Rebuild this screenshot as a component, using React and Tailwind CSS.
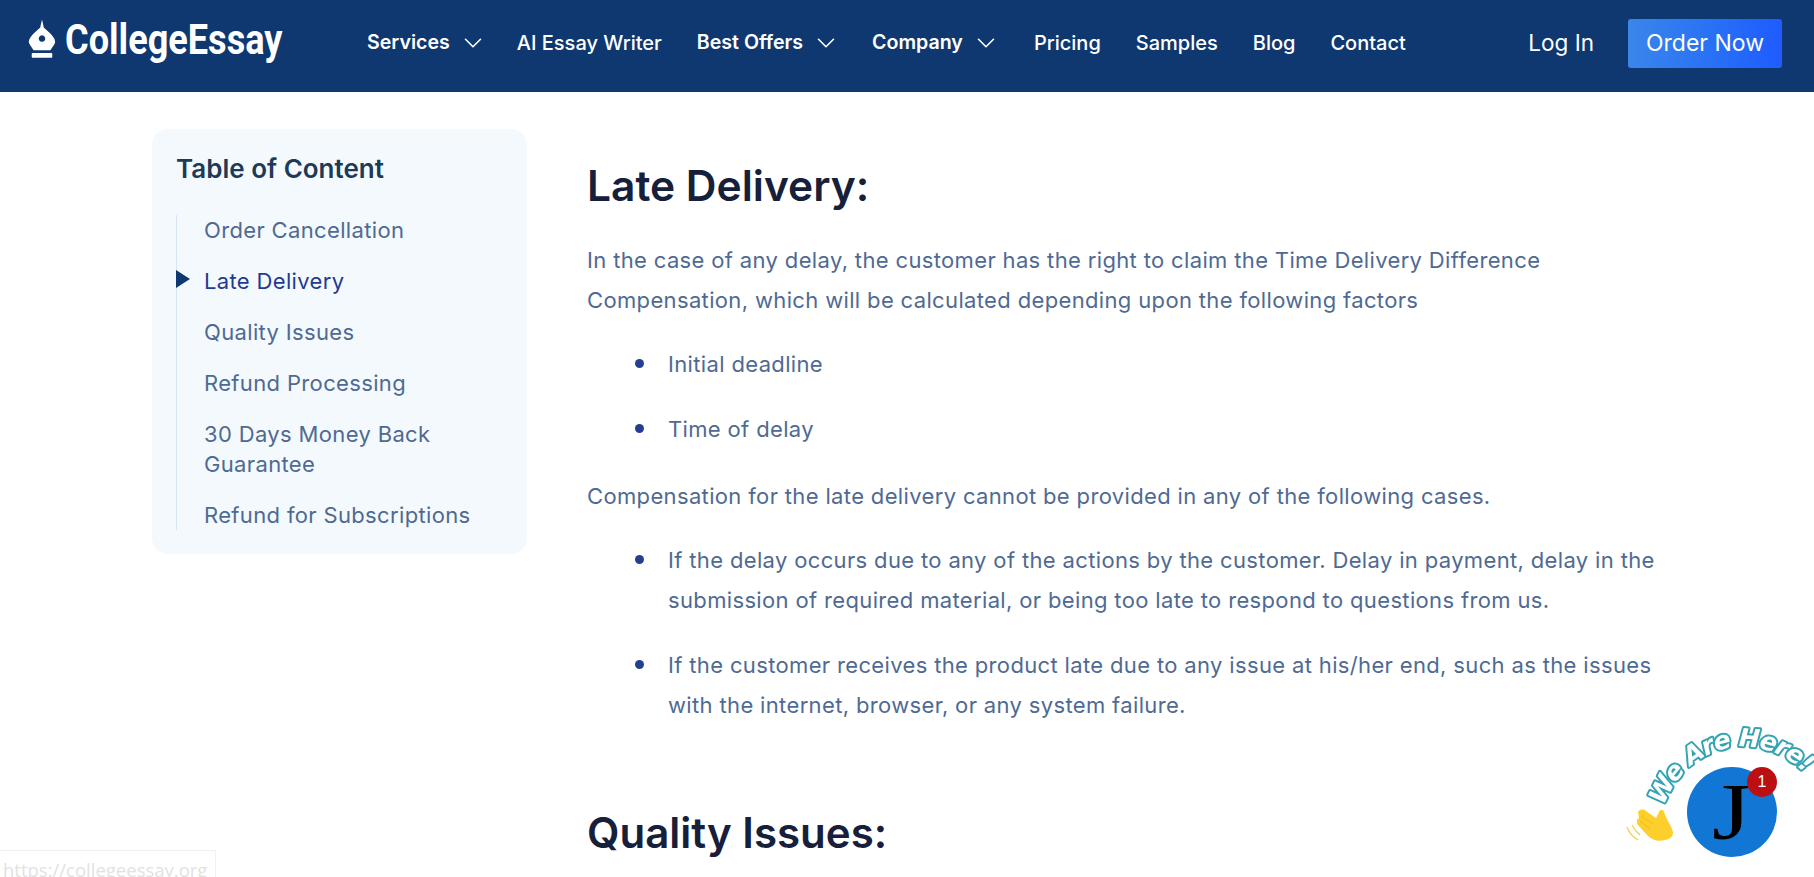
import React from "react";
import { ChevronDown } from "lucide-react";

const toc = ["Order Cancellation", "Late Delivery", "Quality Issues", "Refund Processing", "30 Days Money Back Guarantee", "Refund for Subscriptions"];

function NavItem({ label, caret, className }) {
  return (
    <a className={"flex items-center whitespace-nowrap " + (caret ? "text-[19.6px] font-semibold " : "text-[20px] font-medium ") + className}>
      {label}
      {caret && <ChevronDown className="ml-[8px] h-[30px] w-[30px]" strokeWidth={1.3} />}
    </a>
  );
}

function Logo() {
  return (
    <div className="mb-[8px] flex items-center">
      <svg width="28" height="40" viewBox="0 0 30 42" className="mr-[9px]">
        <path fill="#fff" fillRule="evenodd" d="M15 0 L17 9 C23 14 30 20 29 25 C28 28 25 31 24 33 L6 33 C5 31 2 28 1 25 C0 20 7 14 13 9 Z M15 17 a3.5 3.5 0 1 0 .01 0 Z" />
        <rect x="4" y="36" width="22" height="5" rx="1" fill="#fff" />
      </svg>
      <span className="origin-left scale-x-[0.84] whitespace-nowrap font-['Roboto'] text-[43px] font-bold leading-none text-white">CollegeEssay</span>
    </div>
  );
}

function Bullet({ children }) {
  return (
    <li className="relative pl-[81px]">
      <span className="absolute left-[48px] top-[15px] h-[9px] w-[9px] rounded-full bg-[#243f8f]" />
      {children}
    </li>
  );
}

function ChatWidget() {
  return (
    <div className="fixed bottom-0 right-0 h-[177px] w-[214px]">
      <svg width="214" height="177" viewBox="0 0 214 177" className="absolute inset-0">
        <defs>
          <path id="arc" d="M64 106 C84 48 155 22 208 76" />
        </defs>
        <text className="font-['DejaVu_Sans']" fontSize="25" fontWeight="700" fontStyle="italic" fill="#fff" stroke="#35a3b3" strokeWidth="4" paintOrder="stroke" strokeLinejoin="round">
          <textPath href="#arc" textLength="175">We Are Here!</textPath>
        </text>
        {/* waving hand */}
        <path fill="#fdcf2c" d="M38 112 C40 109 44 109 46 111 L56 118 L59 112 C60 109 63 109 64 112 C66 118 70 124 72 129 C75 135 71 139 65 140 C58 142 52 140 47 135 L38 125 C36 122 37 119 39 118 Z" />
        <path fill="none" stroke="#f0b90b" strokeWidth="0.8" d="M41 116 L53 124 M40 121 L50 129" />
        <path fill="none" stroke="#f3cf48" strokeWidth="1.2" d="M27 127 C29 133 33 137 38 140 M32 125 C34 129 36 132 40 135" />
      </svg>
      <div className="absolute left-[87px] top-[67px] flex h-[90px] w-[90px] items-center justify-center rounded-full bg-[#1277d4] font-['Liberation_Serif'] text-[80px] leading-none text-black">
        <span className="inline-block scale-x-[1.25]">J</span>
      </div>
      <div className="absolute left-[147px] top-[67px] flex h-[30px] w-[30px] items-center justify-center rounded-full bg-[#bb0f12] font-['Liberation_Sans'] text-[16px] text-white">1</div>
    </div>
  );
}

export default function App() {
  return (
    <div className="h-[877px] w-full overflow-hidden bg-white font-['Inter',sans-serif]">
      <header className="flex h-[92px] items-center bg-[#0f3870] pb-[6px] pl-[28px] pr-[32px] text-white">
        <div className="w-[339px]"><Logo /></div>
        <nav className="flex items-center">
          <NavItem label="Services" caret className="mr-[29px]" />
          <NavItem label="AI Essay Writer" className="mr-[35px]" />
          <NavItem label="Best Offers" caret className="mr-[31px]" />
          <NavItem label="Company" caret className="mr-[33px]" />
          <NavItem label="Pricing" className="mr-[35px]" />
          <NavItem label="Samples" className="mr-[35px]" />
          <NavItem label="Blog" className="mr-[35px]" />
          <NavItem label="Contact" />
        </nav>
        <div className="ml-auto flex items-center">
          <a className="mr-[34px] text-[22.5px]">Log In</a>
          <a className="flex h-[49px] w-[154px] items-center justify-center rounded-[3px] bg-gradient-to-r from-[#3a86ea] to-[#1f5bff] text-[23px]">Order Now</a>
        </div>
      </header>

      <div className="flex items-start pl-[152px] pt-[37px]">
        <aside className="w-[375px] shrink-0 rounded-[16px] bg-[#f4f9fe] pb-[24px] pl-[24px] pr-[24px] pt-[23px]">
          <h3 className="text-[26px] font-semibold leading-[34px] text-[#1d3a57]">Table of Content</h3>
          <ul className="mt-[29px] flex flex-col gap-[21px] border-l border-[#d6e6f5] pl-[27px] text-[22px] leading-[30px] tracking-[0.35px] text-[#4f6a92]">
            {toc.map((t) => (
              <li key={t} className={"relative " + (t === "Late Delivery" ? "text-[#1f3c8f]" : "")}>
                {t === "Late Delivery" && <span className="absolute left-[-28px] top-[4px] h-0 w-0 border-y-[9px] border-l-[14px] border-y-transparent border-l-[#0f3870]" />}
                {t}
              </li>
            ))}
          </ul>
        </aside>

        <main className="ml-[60px] w-[1075px] pt-[32px] text-[22px] leading-[40px] tracking-[0.35px] text-[#4f6a92]">
          <h2 className="text-[42.5px] font-semibold leading-[50px] tracking-normal text-[#17203a]">Late Delivery:</h2>
          <p className="mt-[29px]">In the case of any delay, the customer has the right to claim the Time Delivery Difference Compensation, which will be calculated depending upon the following factors</p>
          <ul className="mt-[24px] flex flex-col gap-[25px]">
            <Bullet>Initial deadline</Bullet>
            <Bullet>Time of delay</Bullet>
          </ul>
          <p className="mt-[27px]">Compensation for the late delivery cannot be provided in any of the following cases.</p>
          <ul className="mt-[24px] flex flex-col gap-[25px]">
            <Bullet>If the delay occurs due to any of the actions by the customer. Delay in payment, delay in the submission of required material, or being too late to respond to questions from us.</Bullet>
            <Bullet>If the customer receives the product late due to any issue at his/her end, such as the issues with the internet, browser, or any system failure.</Bullet>
          </ul>
          <h2 className="mt-[83px] text-[42px] font-semibold leading-[50px] tracking-normal text-[#17203a]">Quality Issues:</h2>
        </main>
      </div>

      <ChatWidget />
      <div className="fixed bottom-0 left-0 h-[27px] w-[216px] overflow-hidden border-r border-t border-[#f0f0f0] bg-white pl-[3px] pt-[7px] font-['Open_Sans'] text-[18.5px] leading-[24px] text-[#e2e2e2]">https://collegeessay.org</div>
    </div>
  );
}
